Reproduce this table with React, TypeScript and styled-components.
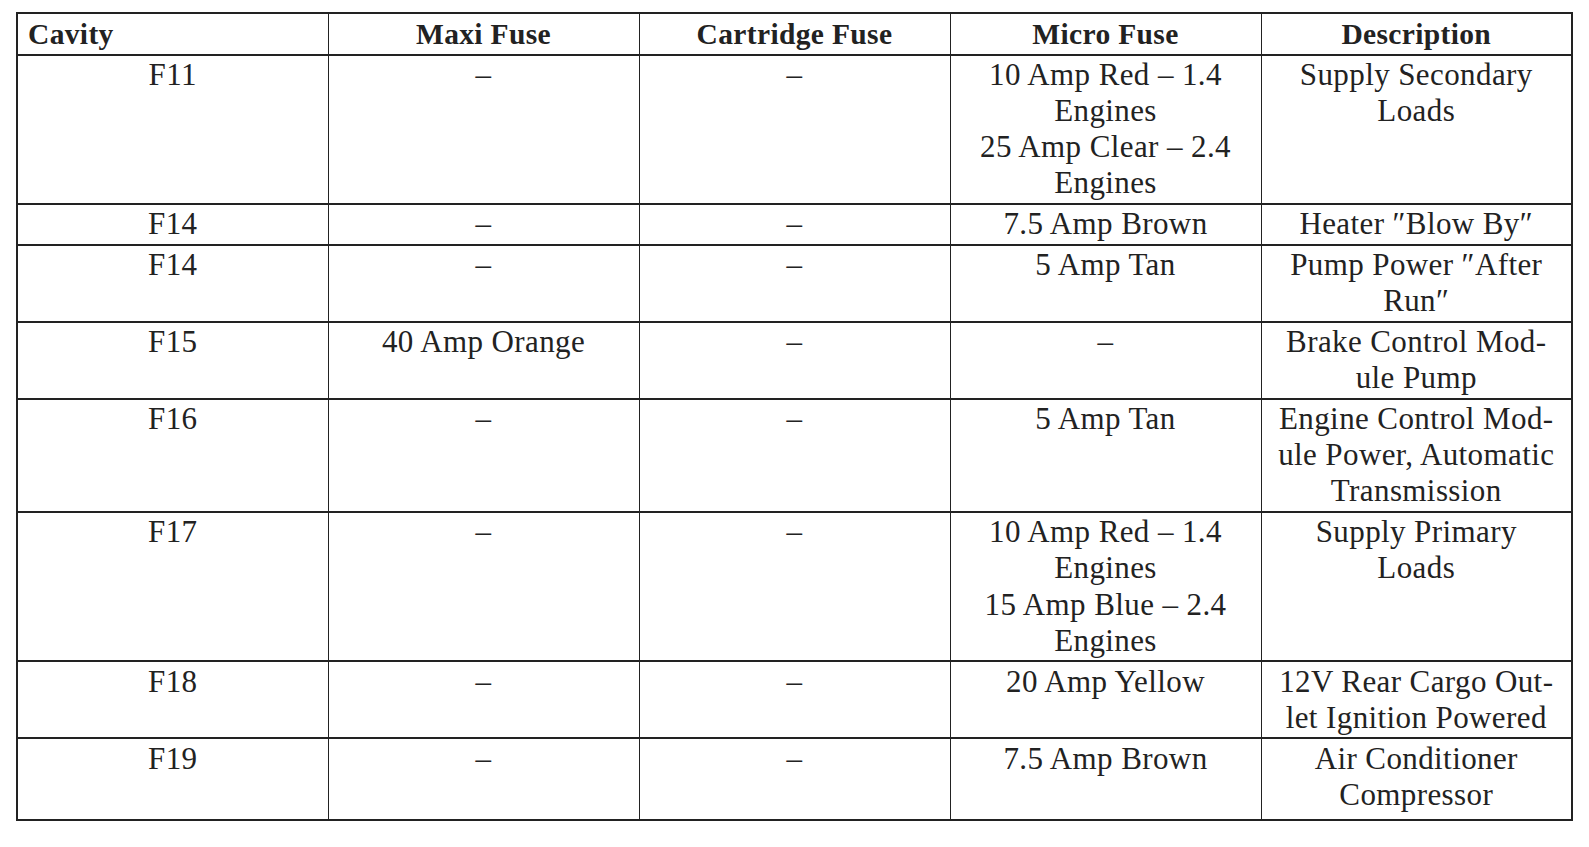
import React from "react";
import styled, { createGlobalStyle } from "styled-components";

const Global = createGlobalStyle`
  html, body { margin: 0; padding: 0; background: #fff; }
  body { font-family: "Liberation Serif", "Times New Roman", serif; color: #222; }
`;

const Page = styled.div`
  padding: 12px 0 0 16px;
`;

const Table = styled.table`
  width: 1557px;
  border-collapse: collapse;
  table-layout: fixed;
  border: 2px solid #222;
`;

const HeadCell = styled.th<{ $left?: boolean }>`
  font-weight: bold;
  font-size: 29.5px;
  line-height: 36px;
  padding: 2px 10px 1.5px;
  text-align: ${(p) => (p.$left ? "left" : "center")};
  border-left: 1.3px solid #222;
  border-bottom: 2.6px solid #222;
  letter-spacing: 0.35px;
`;

const Cell = styled.td<{ $last?: boolean }>`
  font-size: 31px;
  line-height: 36.15px;
  padding: 1.5px 4px ${(p) => (p.$last ? "6px" : "1.2px")};
  text-align: center;
  vertical-align: top;
  border-left: 1.3px solid #222;
  border-top: 2px solid #222;
  letter-spacing: 0.4px;
  white-space: nowrap;
`;

const Line = styled.div``;

type Row = { cavity: string; maxi: string; cart: string; micro: string[]; desc: string[] };

const rows: Row[] = [
  { cavity: "F11", maxi: "–", cart: "–", micro: ["10 Amp Red – 1.4", "Engines", "25 Amp Clear – 2.4", "Engines"], desc: ["Supply Secondary", "Loads"] },
  { cavity: "F14", maxi: "–", cart: "–", micro: ["7.5 Amp Brown"], desc: ["Heater ″Blow By″"] },
  { cavity: "F14", maxi: "–", cart: "–", micro: ["5 Amp Tan"], desc: ["Pump Power ″After", "Run″"] },
  { cavity: "F15", maxi: "40 Amp Orange", cart: "–", micro: ["–"], desc: ["Brake Control Mod-", "ule Pump"] },
  { cavity: "F16", maxi: "–", cart: "–", micro: ["5 Amp Tan"], desc: ["Engine Control Mod-", "ule Power, Automatic", "Transmission"] },
  { cavity: "F17", maxi: "–", cart: "–", micro: ["10 Amp Red – 1.4", "Engines", "15 Amp Blue – 2.4", "Engines"], desc: ["Supply Primary", "Loads"] },
  { cavity: "F18", maxi: "–", cart: "–", micro: ["20 Amp Yellow"], desc: ["12V Rear Cargo Out-", "let Ignition Powered"] },
  { cavity: "F19", maxi: "–", cart: "–", micro: ["7.5 Amp Brown"], desc: ["Air Conditioner", "Compressor"] },
];

export default function App() {
  return (
    <Page>
      <Global />
      <Table>
        <thead>
          <tr>
            <HeadCell $left>Cavity</HeadCell>
            <HeadCell>Maxi Fuse</HeadCell>
            <HeadCell>Cartridge Fuse</HeadCell>
            <HeadCell>Micro Fuse</HeadCell>
            <HeadCell>Description</HeadCell>
          </tr>
        </thead>
        <tbody>
          {rows.map((r, i) => {
            const last = i === rows.length - 1;
            return (
              <tr key={i}>
                <Cell $last={last}>{r.cavity}</Cell>
                <Cell $last={last}>{r.maxi}</Cell>
                <Cell $last={last}>{r.cart}</Cell>
                <Cell $last={last}>{r.micro.map((m, j) => <Line key={j}>{m}</Line>)}</Cell>
                <Cell $last={last}>{r.desc.map((d, j) => <Line key={j}>{d}</Line>)}</Cell>
              </tr>
            );
          })}
        </tbody>
      </Table>
    </Page>
  );
}
